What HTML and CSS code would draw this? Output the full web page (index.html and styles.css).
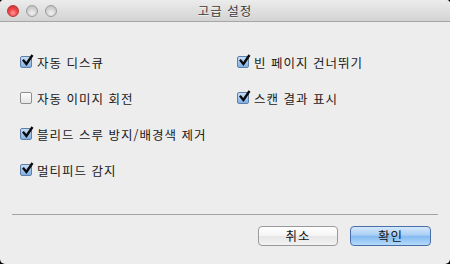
FILE: index.html
```html
<!DOCTYPE html>
<html lang="ko">
<head>
<meta charset="utf-8">
<title>고급 설정</title>
<link rel="stylesheet" href="styles.css">
</head>
<body>
<div class="window">
  <div class="titlebar">
    <div class="lights">
      <span class="light red"></span>
      <span class="light"></span>
      <span class="light"></span>
    </div>
    <div class="title">고급 설정</div>
  </div>
  <div class="options">
    <label class="opt"><span class="box checked"><svg viewBox="0 0 12 12"><path d="M2.5 6.2 L5 9.2 L10 1.8" /></svg></span>자동 디스큐</label>
    <label class="opt"><span class="box checked"><svg viewBox="0 0 12 12"><path d="M2.5 6.2 L5 9.2 L10 1.8" /></svg></span>빈 페이지 건너뛰기</label>
    <label class="opt"><span class="box"></span>자동 이미지 회전</label>
    <label class="opt"><span class="box checked"><svg viewBox="0 0 12 12"><path d="M2.5 6.2 L5 9.2 L10 1.8" /></svg></span>스캔 결과 표시</label>
    <label class="opt wide"><span class="box checked"><svg viewBox="0 0 12 12"><path d="M2.5 6.2 L5 9.2 L10 1.8" /></svg></span>블리드 스루 방지/배경색 제거</label>
    <label class="opt wide"><span class="box checked"><svg viewBox="0 0 12 12"><path d="M2.5 6.2 L5 9.2 L10 1.8" /></svg></span>멀티피드 감지</label>
  </div>
  <div class="sep"></div>
  <div class="buttons">
    <button class="btn">취소</button>
    <button class="btn primary">확인</button>
  </div>
</div>
</body>
</html>
```
FILE: styles.css
```css
html, body {
  margin: 0;
  padding: 0;
  background: #000;
}
.window {
  width: 450px;
  height: 264px;
  background: #ededed;
  border-radius: 4px 4px 5px 5px;
  overflow: hidden;
  font-family: "Noto Sans CJK KR", "Noto Sans", sans-serif;
  color: #1a1a1a;
  display: flex;
  flex-direction: column;
}
.titlebar {
  height: 21px;
  border-bottom: 1px solid #a6a6a6;
  background: linear-gradient(#ececec, #d3d3d3);
  display: flex;
  align-items: center;
  position: relative;
}
.lights {
  display: flex;
  gap: 7px;
  padding-left: 7px;
}
.light {
  width: 12px;
  height: 12px;
  border-radius: 50%;
  box-sizing: border-box;
  border: 1px solid #9c9c9c;
  background: radial-gradient(circle at 50% 70%, #f2f2f2 0%, #d6d6d6 45%, #b8b8b8 100%);
}
.light.red {
  border-color: #b33a3a;
  background: radial-gradient(circle at 50% 70%, #ff9a9a 0%, #f2474a 45%, #c8282a 100%);
}
.title {
  position: absolute;
  left: 0;
  right: 0;
  top: 0;
  height: 21px;
  line-height: 21px;
  text-align: center;
  font-size: 12.5px;
  letter-spacing: 1px;
  color: #3a3a3a;
  text-shadow: 0 1px 0 rgba(255,255,255,0.6);
}
.options {
  display: grid;
  grid-template-columns: 217px auto;
  grid-auto-rows: 36px;
  padding: 22px 0 0 20px;
}
.opt {
  display: flex;
  align-items: center;
  gap: 5px;
  font-size: 12.5px;
  letter-spacing: 1px;
  white-space: nowrap;
}
.opt.wide {
  grid-column: 1 / 3;
}
.box {
  width: 12px;
  height: 12px;
  box-sizing: border-box;
  border: 1px solid #8e8e8e;
  border-radius: 2px;
  background: linear-gradient(#ffffff, #e4e4e4);
  display: flex;
  align-items: center;
  justify-content: center;
  flex: none;
}
.box.checked {
  border-color: #5f7fa8;
  background: linear-gradient(#c6dcf6, #7fb1e6);
  overflow: visible;
}
.box svg {
  width: 13px;
  height: 13px;
  margin: -3px -2px 0 0;
  overflow: visible;
}
.box svg path {
  fill: none;
  stroke: #0c0c0c;
  stroke-width: 2.2;
  stroke-linecap: square;
  stroke-linejoin: miter;
}
.sep {
  height: 1px;
  background: #a3a3a3;
  margin: 26px 12px 0 12px;
}
.buttons {
  display: flex;
  justify-content: flex-end;
  gap: 12px;
  padding: 11px 19px 0 0;
}
.btn {
  width: 80px;
  height: 20px;
  box-sizing: border-box;
  border: 1px solid #9a9a9a;
  border-radius: 4px;
  background: linear-gradient(#ffffff 0%, #f4f4f4 50%, #e6e6e6 51%, #f2f2f2 100%);
  font-family: "Noto Sans CJK KR", "Noto Sans", sans-serif;
  font-size: 12.5px;
  letter-spacing: 1px;
  color: #111;
  padding: 0;
  line-height: 18px;
}
.btn.primary {
  width: 81px;
  border-color: #4a6ea8;
  background: linear-gradient(#d6e8fb 0%, #a9cff4 45%, #84bbf0 52%, #b5dafb 100%);
}
```
